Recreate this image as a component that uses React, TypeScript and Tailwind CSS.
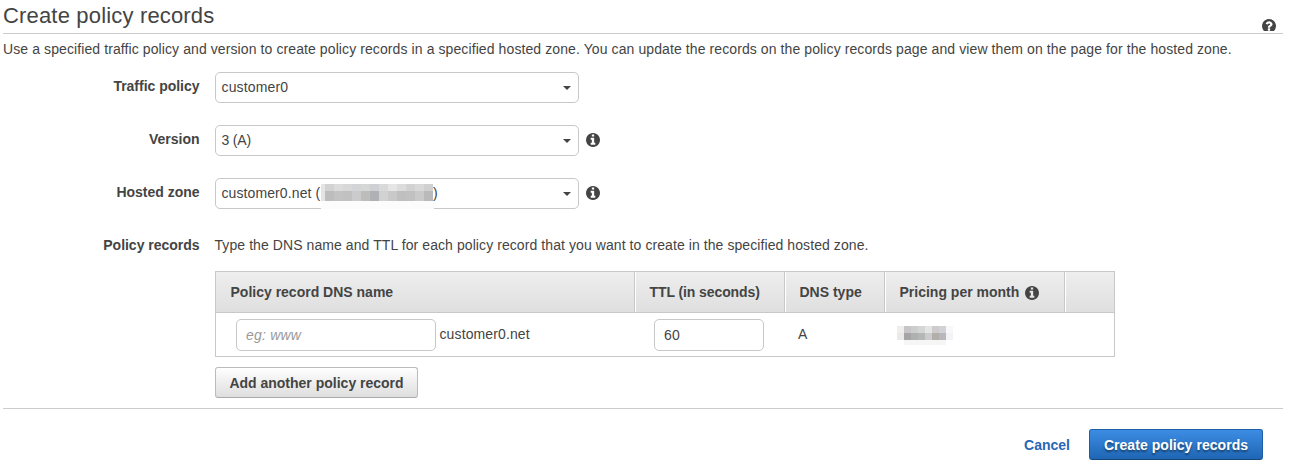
import type { ReactNode } from 'react';

const ZONE_TOP = ['#d2d2d2', '#dcdcdd', '#d8d8d8', '#d3d4d6', '#d6d6d6', '#cfd0d3', '#d9d9d9', '#e5e5e5', '#dcdcdc', '#d2d2d2', '#d9d9d9', '#d0d0d0'];
const ZONE_BOTTOM = ['#bdbdbd', '#c3c3c3', '#c1c1c1', '#cbcbcd', '#bdbdbb', '#b0b1b5', '#d2d2d2', '#c9c9c9', '#bfbfbf', '#c1c1c1', '#cacaca', '#b9bab9'];
const PRICE_TOP = ['#efeeed', '#c6c6c8', '#cdcdcf', '#d4d6d5', '#e3e5e5', '#cfcbcc', '#d1d1d6', '#f8f8fa'];
const PRICE_BOTTOM = ['#eae9e7', '#a5a5a8', '#afb0b0', '#b5b7b6', '#cccccf', '#b2afab', '#b7b7bc', '#f3f3f6'];

function Info({ className = '' }: { className?: string }) {
  return (
    <svg width="14" height="14" viewBox="128 128 1536 1536" fill="#444" className={`shrink-0 ${className}`}>
      <path d="M1152 1376v-160q0-14-9-23t-23-9h-96v-512q0-14-9-23t-23-9h-320q-14 0-23 9t-9 23v160q0 14 9 23t23 9h96v320h-96q-14 0-23 9t-9 23v160q0 14 9 23t23 9h448q14 0 23-9t9-23zm-128-896v-160q0-14-9-23t-23-9h-192q-14 0-23 9t-9 23v160q0 14 9 23t23 9h192q14 0 23-9t9-23zm640 416q0 209-103 385.5t-279.5 279.5-385.5 103-385.5-103-279.5-279.5-103-385.5 103-385.5 279.5-279.5 385.5-103 385.5 103 279.5 279.5 103 385.5z" />
    </svg>
  );
}

function Help() {
  return (
    <svg width="14" height="14" viewBox="128 128 1536 1536" fill="#444">
      <path d="M1024 1376v-192q0-14-9-23t-23-9h-192q-14 0-23 9t-9 23v192q0 14 9 23t23 9h192q14 0 23-9t9-23zm256-672q0-88-55.5-163t-138.5-116-170-41q-243 0-371 213-15 24 8 42l132 100q7 6 19 6 16 0 25-12 53-68 86-92 34-24 86-24 48 0 85.5 26t37.5 59q0 38-20 61t-68 45q-63 28-115.5 86.5t-52.5 125.5v36q0 14 9 23t23 9h192q14 0 23-9t9-23q0-19 21.5-49.5t54.5-49.5q32-18 49-28.5t46-35 44.5-48 28-60.5 12.5-81zm384 192q0 209-103 385.5t-279.5 279.5-385.5 103-385.5-103-279.5-279.5-103-385.5 103-385.5 279.5-279.5 385.5-103 385.5 103 279.5 279.5 103 385.5z" />
    </svg>
  );
}

function Row({ label, children }: { label: string; children: ReactNode }) {
  return (
    <div className="flex h-[31px]">
      <div className="w-[199.5px] shrink-0 pt-[5px] text-right font-bold leading-[18px] tracking-[-0.02px]">{label}</div>
      <div className="ml-[15.5px] flex items-center">{children}</div>
    </div>
  );
}

function Select({ children }: { children: ReactNode }) {
  return (
    <div className="relative flex h-[31px] w-[364px] items-center justify-between rounded-[5px] border border-[#c8c8c8] bg-white pl-[5.5px] pr-[7px]">
      {children}
      <svg width="8" height="4" viewBox="0 0 8 4" className="mt-px">
        <path d="M0 0h8L4 4z" fill="#444" />
      </svg>
    </div>
  );
}

function Cells({ colors, className }: { colors: string[]; className: string }) {
  return (
    <div className="flex">
      {colors.map((color, i) => (
        <span key={i} className={className} style={{ backgroundColor: color }} />
      ))}
    </div>
  );
}

export default function App() {
  return (
    <div className="h-[474px] w-[1290px] bg-white font-['Liberation_Sans',Arial,sans-serif] text-[14px] leading-[18px] text-[#444]">
      <header className="ml-[3px] flex h-[34px] w-[1280px] justify-between border-b border-[#ccc]">
        <h1 className="pt-px text-[22px] leading-[30px] tracking-[0.17px]">Create policy records</h1>
        <div className="mr-[7px] mt-[19px] h-[12px] overflow-hidden">
          <Help />
        </div>
      </header>
      <p className="ml-[3px] mt-[6px] whitespace-nowrap tracking-[0.096px]">
        Use a specified traffic policy and version to create policy records in a specified hosted zone. You can update the records on the policy records page and view them on the page for the hosted zone.
      </p>

      <div className="mt-[14px] flex flex-col gap-[22px]">
        <Row label="Traffic policy">
          <Select><span className="pb-[2px] tracking-[0.15px]">customer0</span></Select>
        </Row>
        <Row label="Version">
          <Select><span className="pb-[2px] tracking-[-0.2px]">3 (A)</span></Select>
          <Info className="mb-px ml-[7px]" />
        </Row>
        <Row label="Hosted zone">
          <Select>
            <span className="pb-[2px] tracking-[0.1px]">customer0.net (</span>
            <span className="absolute left-[217px] top-[5px]">)</span>
            <div className="absolute left-[105px] top-[5px] flex w-[113px] flex-col">
              <div className="flex">
                <div className="w-[4px] bg-[#e4e4e4]" />
                <div>
                  <Cells colors={ZONE_TOP} className="h-[7px] w-[9px]" />
                  <Cells colors={ZONE_BOTTOM} className="h-[10px] w-[9px]" />
                </div>
              </div>
              <div className="h-[8px] bg-[#fcfcfc]" />
            </div>
          </Select>
          <Info className="mb-px ml-[7px]" />
        </Row>
        <Row label="Policy records">
          <p className="-ml-[0.5px] self-start whitespace-nowrap pt-[5px] tracking-[0.079px]">
            Type the DNS name and TTL for each policy record that you want to create in the specified hosted zone.
          </p>
        </Row>
      </div>

      <div className="ml-[215px] mt-[9px] w-[900px] border border-[#c8c8c8]">
        <div className="grid h-[41px] grid-cols-[419px_150px_100px_180px_49px] border-b border-[#c8c8c8] bg-linear-to-b from-[#eeeeee] to-[#dfdfdf] font-bold">
          <div className="flex items-center border-r border-[#c8c8c8] pl-[14.5px]">Policy record DNS name</div>
          <div className="flex items-center border-l border-r border-l-white border-r-[#c8c8c8] pl-[13.5px] tracking-[-0.09px]">TTL (in seconds)</div>
          <div className="flex items-center border-l border-r border-l-white border-r-[#c8c8c8] pl-[13.5px]">DNS type</div>
          <div className="flex items-center border-l border-r border-l-white border-r-[#c8c8c8] pl-[13.5px]">
            Pricing per month
            <Info className="ml-[5.5px] mt-px" />
          </div>
          <div className="border-l border-white" />
        </div>
        <div className="grid h-[43px] grid-cols-[419px_150px_100px_180px_49px] items-center">
          <div className="flex items-center pl-[20px]">
            <input placeholder="eg: www" className="mt-px h-[32px] w-[200px] rounded-[5px] border border-[#c8c8c8] px-[9px] tracking-[0.2px] placeholder:italic placeholder:text-[#999]" />
            <span className="ml-[3.5px] pb-px tracking-[0.12px]">customer0.net</span>
          </div>
          <div className="pl-[19px]">
            <input defaultValue="60" className="mt-px h-[32px] w-[110px] rounded-[5px] border border-[#c8c8c8] px-[9px] tracking-[0.2px]" />
          </div>
          <div className="pb-px pl-[13px]">A</div>
          <div className="pl-[12px] pt-[2px]">
            <Cells colors={PRICE_TOP} className="size-[7px]" />
            <Cells colors={PRICE_BOTTOM} className="size-[7px]" />
            <div className="ml-[7px] h-[5px] w-[42px] bg-[#f6f6f6]" />
          </div>
          <div />
        </div>
      </div>

      <button className="ml-[215px] mt-[10px] block h-[31px] w-[203px] rounded-[3px] border border-[#bbb] border-b-[#aaa] bg-linear-to-b from-white to-[#dedede] font-bold">
        Add another policy record
      </button>

      <footer className="ml-[3px] mt-[10px] flex h-[52px] w-[1280px] items-end justify-end border-t border-[#ccc] pr-[20px]">
        <a className="mb-[6px] mr-[19px] font-bold text-[#2767b5]">Cancel</a>
        <button className="h-[31px] w-[174px] rounded-[3px] border border-[#1c5fa8] border-b-[#14467c] bg-linear-to-b from-[#3c8de4] to-[#1f66b4] font-bold tracking-[0.05px] text-white [text-shadow:0_2px_2px_rgba(0,0,0,0.45)]">
          Create policy records
        </button>
      </footer>
    </div>
  );
}
